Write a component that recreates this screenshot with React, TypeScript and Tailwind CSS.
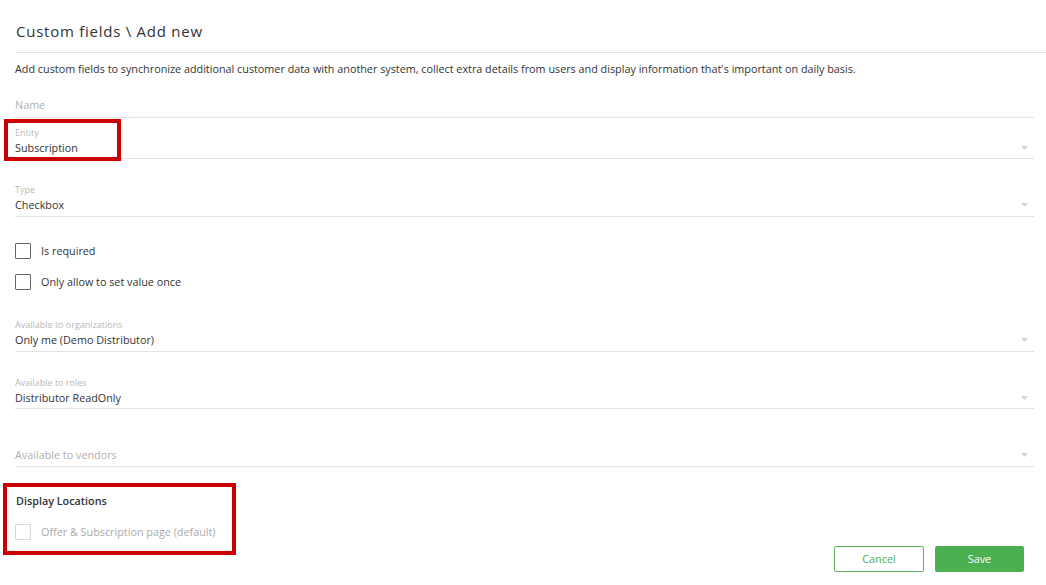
import React from 'react';

const Arrow = () => (
  <svg width="7" height="4" viewBox="0 0 7 4" className="mr-[6px]">
    <path d="M0 0 L7 0 L3.5 4 Z" fill="#d4d4d4" />
  </svg>
);

type FieldProps = {
  label?: string;
  value?: string;
  placeholder?: string;
  h: string;
  pb: string;
  select?: boolean;
};

const Field = ({ label, value, placeholder, h, pb, select }: FieldProps) => (
  <div className={`${h} ${pb} border-b border-[#e3e3e3] flex flex-col justify-end`}>
    {label && <div className="text-[9px] leading-[12px] text-[#b8b8b8] mb-[1px]">{label}</div>}
    <div className="flex items-center justify-between">
      {value ? (
        <span className="text-[10.8px] leading-[16px] text-[#333]">{value}</span>
      ) : (
        <span className="text-[10.8px] leading-[16px] text-[#b0b0b0]">{placeholder}</span>
      )}
      {select && <Arrow />}
    </div>
  </div>
);

const Check = ({ label }: { label: string }) => (
  <div className="flex items-center h-[31px]">
    <span className="w-[16px] h-[16px] border border-[#666] rounded-[1px]" />
    <span className="ml-[10px] text-[10.8px] leading-[16px] text-[#333]">{label}</span>
  </div>
);

const App = () => {
  return (
    <div
      className="relative w-[1046px] h-[585px] bg-white overflow-hidden pl-[15px]"
      style={{ fontFamily: '"Open Sans", "Liberation Sans", sans-serif' }}
    >
      <div className="pt-[21px] pb-[11px] border-b border-[#e3e3e3]">
        <h1 className="text-[15px] leading-[20px] tracking-[0.75px] text-[#333] font-normal pl-[1px]">
          Custom fields \ Add new
        </h1>
      </div>

      <p className="mt-[8px] text-[10.8px] leading-[16px] text-[#333]">
        Add custom fields to synchronize additional customer data with another system, collect extra details from users
        and display information that's important on daily basis.
      </p>

      <div className="mr-[12px]">
        <Field placeholder="Name" h="h-[41px]" pb="pb-[4px]" />
        <Field label="Entity" value="Subscription" h="h-[41px]" pb="pb-[2px]" select />
        <Field label="Type" value="Checkbox" h="h-[58px]" pb="pb-[3px]" select />

        <div className="mt-[18px]">
          <Check label="Is required" />
          <Check label="Only allow to set value once" />
        </div>

        <Field
          label="Available to organizations"
          value="Only me (Demo Distributor)"
          h="h-[55px]"
          pb="pb-[3px]"
          select
        />
        <Field label="Available to roles" value="Distributor ReadOnly" h="h-[57px]" pb="pb-[2px]" select />
        <Field placeholder="Available to vendors" h="h-[58px]" pb="pb-[3px]" select />

        <div className="flex items-end justify-between">
          <div className="pt-[26px] pb-[32px]">
            <div className="text-[10.8px] leading-[16px] font-semibold text-[#333] pl-[1px]">Display Locations</div>
            <div className="mt-[15px] flex items-center h-[16px]">
              <span className="w-[16px] h-[16px] border border-[#d6d6d6] rounded-[1px]" />
              <span className="ml-[10px] text-[10.8px] leading-[16px] text-[#aaa]">
                Offer &amp; Subscription page (default)
              </span>
            </div>
          </div>
          <div className="flex gap-[11px] mr-[10px]">
            <button className="w-[90px] h-[26px] border border-[#5cb85c] rounded-[2px] text-[10.8px] text-[#4cae4c] bg-white">
              Cancel
            </button>
            <button className="w-[89px] h-[26px] rounded-[2px] text-[10.8px] text-white bg-[#4caf50]">Save</button>
          </div>
        </div>
      </div>

      <div className="absolute left-[4px] top-[119px] w-[117px] h-[42px] border-[4px] border-[#cc0000]" />
      <div className="absolute left-[3px] top-[483px] w-[233px] h-[72px] border-[4px] border-[#cc0000]" />
    </div>
  );
};

export default App;
